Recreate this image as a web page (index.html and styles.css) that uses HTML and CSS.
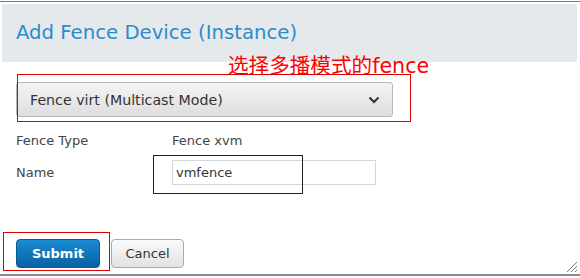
FILE: index.html
```html
<!DOCTYPE html>
<html>
<head>
  <title>Add Fence Device</title>
  <link rel="stylesheet" href="styles.css">
</head>
<body>
  <div class="dialog">
    <div class="dialog-header">
      <h2 class="dialog-title">Add Fence Device (Instance)</h2>
    </div>

    <form class="dialog-body">
      <div class="select-box">
        <span>Fence virt (Multicast Mode)</span>
        <svg class="chevron" width="12" height="8" viewBox="0 0 12 8">
          <polyline points="1.5,1.5 6,6 10.5,1.5" fill="none" stroke="#333" stroke-width="2"/>
        </svg>
      </div>

      <div class="field-row type-row">
        <label class="field-label">Fence Type</label>
        <span class="field-value">Fence xvm</span>
      </div>

      <div class="field-row name-row">
        <label class="field-label">Name</label>
        <input class="text-input" type="text" value="vmfence">
      </div>

      <div class="actions">
        <button type="button" class="btn btn-primary">Submit</button>
        <button type="button" class="btn btn-default">Cancel</button>
      </div>
    </form>

    <!-- annotations drawn over the screenshot -->
    <div class="note-text">选择多播模式的fence</div>
    <div class="note-box note-select"></div>
    <div class="note-box note-name"></div>
    <div class="note-box note-submit"></div>

    <svg class="grip" width="14" height="14" viewBox="0 0 14 14">
      <line x1="13" y1="3" x2="3" y2="13" stroke="#777" stroke-width="1"/>
      <line x1="13" y1="7" x2="7" y2="13" stroke="#777" stroke-width="1"/>
      <line x1="13" y1="11" x2="11" y2="13" stroke="#777" stroke-width="1"/>
    </svg>
  </div>
</body>
</html>
```

FILE: styles.css
```css
html, body {
  margin: 0;
  padding: 0;
  background: #fff;
  font-family: "DejaVu Sans", sans-serif;
}

.dialog {
  position: relative;
  height: 272px;
  margin-top: 1px;
  border-top: 1px solid #7a7a7a;
  border-bottom: 2px solid #8a8a8a;
}

.dialog-header {
  display: flex;
  align-items: center;
  height: 58px;
  margin: 2px 3px 0 2px;
  padding-left: 14px;
  background: #e6e9ec;
}

.dialog-title {
  margin: 0 0 2px 0;
  font-size: 19.7px;
  font-weight: normal;
  color: #2a8ccb;
}

.dialog-body {
  display: flex;
  flex-direction: column;
  padding: 20px 16px 0 16px;
}

.select-box {
  display: flex;
  align-items: center;
  justify-content: space-between;
  box-sizing: border-box;
  width: 377px;
  height: 35px;
  padding: 0 12px 0 13px;
  border: 1px solid #b8b8b8;
  border-radius: 3px;
  background: linear-gradient(#f4f4f4, #dedede);
  font-size: 14.2px;
  color: #333;
}

.field-row {
  display: flex;
  align-items: center;
  font-size: 13px;
  color: #444;
}

.type-row {
  height: 22px;
  margin-top: 12px;
}

.name-row {
  height: 25px;
  margin-top: 9px;
}

.field-label {
  width: 156px;
}

.text-input {
  box-sizing: border-box;
  width: 204px;
  height: 25px;
  padding: 0 3px;
  border: 1px solid #d4d8dc;
  font-family: "DejaVu Sans", sans-serif;
  font-size: 13px;
  color: #333;
}

.actions {
  display: flex;
  gap: 11px;
  margin-top: 54px;
}

.btn {
  height: 29px;
  border-radius: 4px;
  font-family: "DejaVu Sans", sans-serif;
  font-size: 13px;
  padding: 0;
}

.btn-primary {
  width: 84px;
  border: 1px solid #0a5a94;
  background: linear-gradient(#1a8ad0, #0a62a3);
  color: #fff;
  font-weight: bold;
}

.btn-default {
  width: 73px;
  border: 1px solid #aaa;
  background: linear-gradient(#fafafa, #e2e2e2);
  color: #333;
}

.note-text {
  position: absolute;
  left: 228px;
  top: 47px;
  font-family: "DejaVu Sans", "Noto Sans CJK SC", sans-serif;
  font-size: 20.6px;
  color: #ff0000;
}

.note-box {
  position: absolute;
  box-sizing: border-box;
}

.note-select {
  left: 17px;
  top: 72px;
  width: 394px;
  height: 48px;
  border: 1px solid #e00000;
}

.note-name {
  left: 153px;
  top: 153px;
  width: 150px;
  height: 39px;
  border: 1px solid #222;
}

.note-submit {
  left: 3px;
  top: 230px;
  width: 107px;
  height: 39px;
  border: 1px solid #e00000;
}

.grip {
  position: absolute;
  right: 2px;
  bottom: 1px;
}
```
